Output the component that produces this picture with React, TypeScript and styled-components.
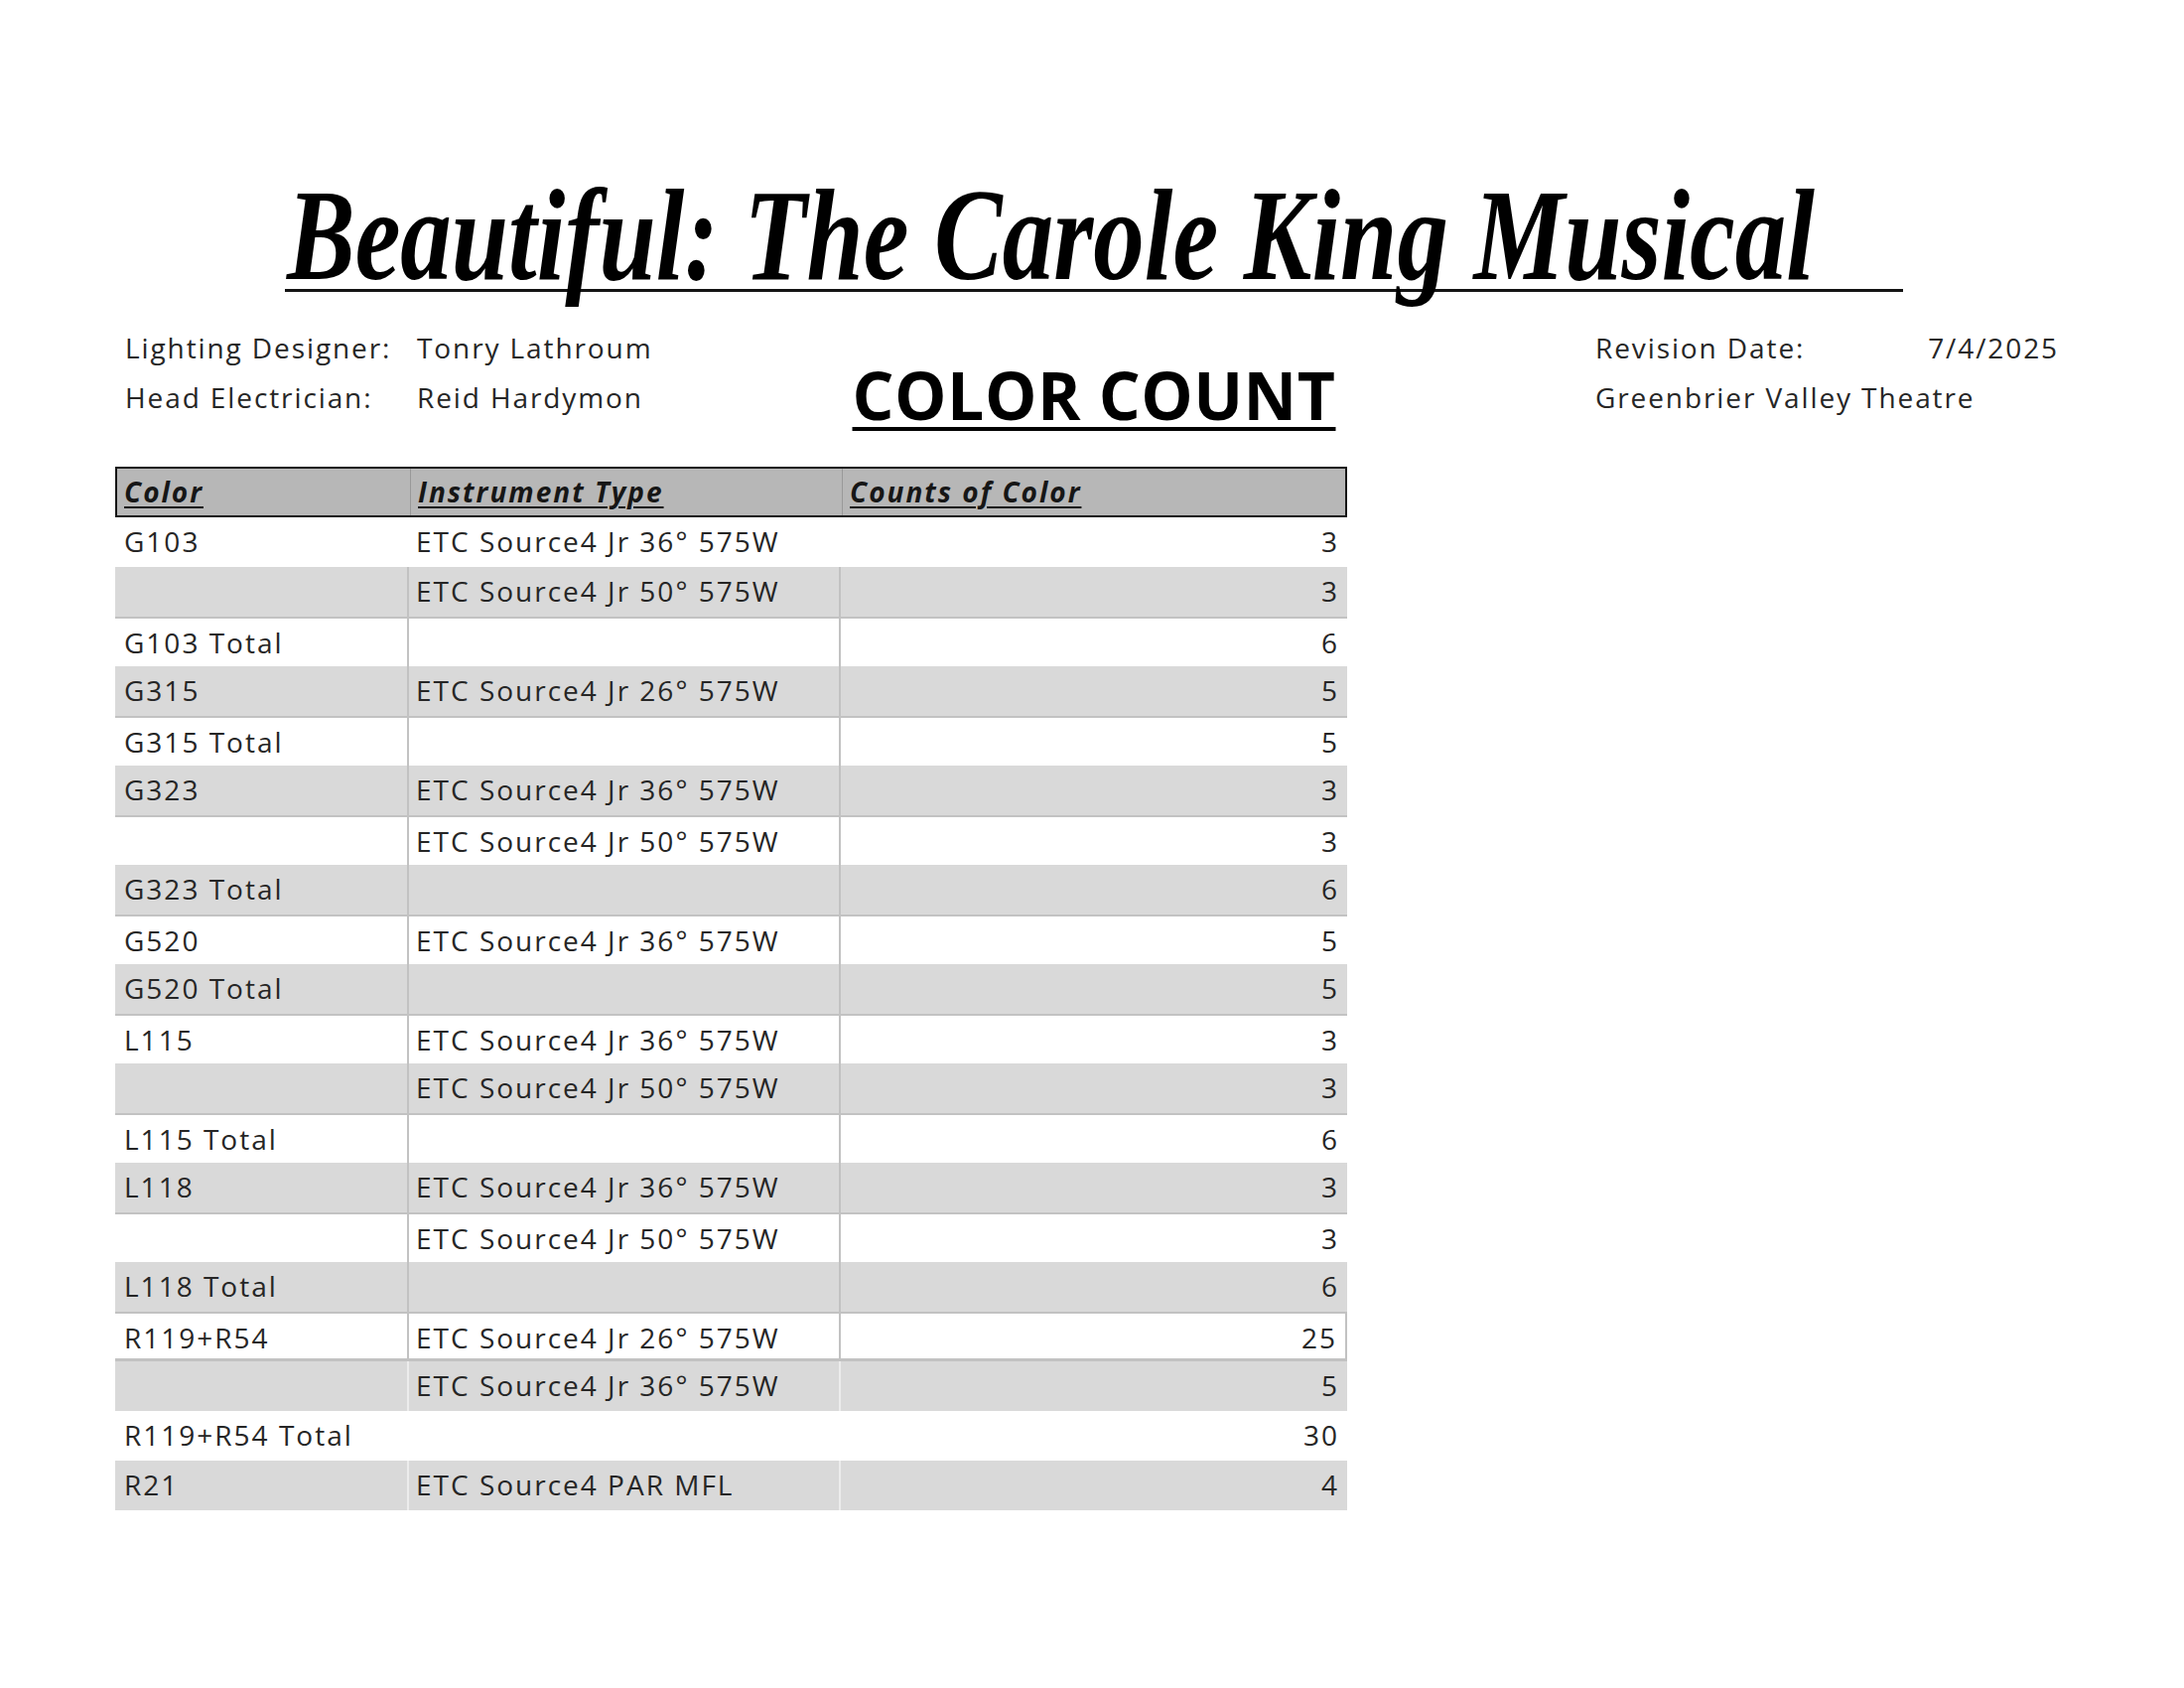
import React from 'react';
import styled, { createGlobalStyle } from 'styled-components';

const GlobalStyle = createGlobalStyle`
  html, body {
    margin: 0;
    padding: 0;
    background: #ffffff;
  }
  body {
    font-family: 'Open Sans', 'Liberation Sans', sans-serif;
    color: #1a1a1a;
  }
`;

const Page = styled.div`
  width: 2200px;
  height: 1700px;
  box-sizing: border-box;
  padding-top: 174px;
  background: #ffffff;
  overflow: hidden;
`;

const TitleBar = styled.div`
  margin-left: 287px;
  width: 1630px;
  height: 117px;
  border-bottom: 3px solid #141414;
  display: flex;
  align-items: flex-end;
`;

const TitleText = styled.h1`
  margin: 0 0 -12px 2px;
  font-family: 'Liberation Serif', 'DejaVu Serif', serif;
  font-weight: 700;
  font-style: italic;
  font-size: 132px;
  line-height: 1;
  white-space: nowrap;
  color: #000;
  transform: scaleX(0.78);
  transform-origin: left bottom;
`;

const InfoGrid = styled.div`
  display: grid;
  grid-template-columns: 296px 435px 510px 250px 330px 137px;
  grid-template-rows: 50px 50px;
  margin: 31px 0 0 116px;
  font-size: 28px;
  font-weight: 400;
  letter-spacing: 1.9px;
  line-height: 50px;
  color: #262626;
`;

const InfoCell = styled.div<{ $pad?: number; $right?: boolean }>`
  padding-left: ${({ $pad }) => $pad ?? 0}px;
  text-align: ${({ $right }) => ($right ? 'right' : 'left')};
  white-space: nowrap;
`;

const Spacer = styled.div`
  grid-column: 4;
`;

const WideCell = styled(InfoCell)`
  grid-column: 5 / 7;
`;

const SheetHeading = styled.div`
  grid-column: 3;
  grid-row: 1 / 3;
  align-self: start;
  margin-top: 39px;
  text-align: center;
  font-size: 66px;
  font-weight: 700;
  letter-spacing: 0.5px;
  line-height: 66px;
  white-space: nowrap;
  color: #000;
  text-decoration: underline;
  text-decoration-thickness: 4px;
  text-underline-offset: 7px;
`;

const Table = styled.div`
  margin: 45px 0 0 116px;
  width: 1241px;
`;

const HeaderRow = styled.div`
  display: grid;
  grid-template-columns: 296px 435px 510px;
  box-sizing: border-box;
  height: 51px;
  border: 2px solid #161616;
  background: #b7b7b7;
`;

const HeaderCell = styled.div<{ $last?: boolean }>`
  padding-left: 7px;
  border-right: ${({ $last }) => ($last ? 'none' : '1px solid #999')};
  font-size: 28px;
  font-weight: 700;
  font-style: italic;
  letter-spacing: 2px;
  line-height: 47px;
  color: #161616;
  text-decoration: underline;
  text-decoration-thickness: 2px;
  text-underline-offset: 4px;
  white-space: nowrap;
`;

type Shade = 'white' | 'gray';
type Lines = 'none' | 'gray' | 'white';

const Row = styled.div<{ $shade: Shade; $lines: Lines; $closed?: boolean }>`
  display: grid;
  grid-template-columns: 296px 435px 510px;
  box-sizing: border-box;
  height: 50px;
  background: ${({ $shade }) => ($shade === 'gray' ? '#d9d9d9' : '#ffffff')};
  border-top: ${({ $shade, $lines }) =>
    $shade === 'white' && $lines === 'gray' ? '2px solid #c2c2c2' : 'none'};
  border-bottom: ${({ $closed }) => ($closed ? '3px solid #c2c2c2' : 'none')};
`;

const Cell = styled.div<{ $lines: Lines; $last?: boolean; $closed?: boolean; $pad: number }>`
  box-sizing: border-box;
  padding: 0 ${({ $last }) => ($last ? 8 : 0)}px 0 ${({ $pad }) => $pad}px;
  text-align: ${({ $last }) => ($last ? 'right' : 'left')};
  font-size: 28px;
  font-weight: 400;
  letter-spacing: 2px;
  line-height: 48px;
  color: #262626;
  white-space: nowrap;
  border-right: ${({ $lines, $last, $closed }) => {
    if ($last) return $closed ? '2px solid #c2c2c2' : 'none';
    if ($lines === 'gray') return '2px solid #c2c2c2';
    if ($lines === 'white') return '2px solid #ececec';
    return 'none';
  }};
`;

type Entry = {
  color: string;
  type: string;
  count: number;
  shade: Shade;
  lines: Lines;
  closed?: boolean;
};

const jr = (deg: number) => `ETC Source4 Jr ${deg}° 575W`;

const entries: Entry[] = [
  { color: 'G103', type: jr(36), count: 3, shade: 'white', lines: 'none' },
  { color: '', type: jr(50), count: 3, shade: 'gray', lines: 'gray' },
  { color: 'G103 Total', type: '', count: 6, shade: 'white', lines: 'gray' },
  { color: 'G315', type: jr(26), count: 5, shade: 'gray', lines: 'gray' },
  { color: 'G315 Total', type: '', count: 5, shade: 'white', lines: 'gray' },
  { color: 'G323', type: jr(36), count: 3, shade: 'gray', lines: 'gray' },
  { color: '', type: jr(50), count: 3, shade: 'white', lines: 'gray' },
  { color: 'G323 Total', type: '', count: 6, shade: 'gray', lines: 'gray' },
  { color: 'G520', type: jr(36), count: 5, shade: 'white', lines: 'gray' },
  { color: 'G520 Total', type: '', count: 5, shade: 'gray', lines: 'gray' },
  { color: 'L115', type: jr(36), count: 3, shade: 'white', lines: 'gray' },
  { color: '', type: jr(50), count: 3, shade: 'gray', lines: 'gray' },
  { color: 'L115 Total', type: '', count: 6, shade: 'white', lines: 'gray' },
  { color: 'L118', type: jr(36), count: 3, shade: 'gray', lines: 'gray' },
  { color: '', type: jr(50), count: 3, shade: 'white', lines: 'gray' },
  { color: 'L118 Total', type: '', count: 6, shade: 'gray', lines: 'gray' },
  { color: 'R119+R54', type: jr(26), count: 25, shade: 'white', lines: 'gray', closed: true },
  { color: '', type: jr(36), count: 5, shade: 'gray', lines: 'white' },
  { color: 'R119+R54 Total', type: '', count: 30, shade: 'white', lines: 'none' },
  { color: 'R21', type: 'ETC Source4 PAR MFL', count: 4, shade: 'gray', lines: 'white' },
];

const App: React.FC = () => {
  return (
    <>
      <GlobalStyle />
      <Page>
        <TitleBar>
          <TitleText>Beautiful: The Carole King Musical</TitleText>
        </TitleBar>

        <InfoGrid>
          <InfoCell $pad={10}>Lighting Designer:</InfoCell>
          <InfoCell $pad={8}>Tonry Lathroum</InfoCell>
          <SheetHeading>COLOR COUNT</SheetHeading>
          <Spacer />
          <InfoCell>Revision Date:</InfoCell>
          <InfoCell $right>7/4/2025</InfoCell>

          <InfoCell $pad={10}>Head Electrician:</InfoCell>
          <InfoCell $pad={8}>Reid Hardymon</InfoCell>
          <Spacer />
          <WideCell>Greenbrier Valley Theatre</WideCell>
        </InfoGrid>

        <Table>
          <HeaderRow>
            <HeaderCell>Color</HeaderCell>
            <HeaderCell>Instrument Type</HeaderCell>
            <HeaderCell $last>Counts of Color</HeaderCell>
          </HeaderRow>
          {entries.map((e, i) => (
            <Row key={i} $shade={e.shade} $lines={e.lines} $closed={e.closed}>
              <Cell $lines={e.lines} $pad={9}>
                {e.color}
              </Cell>
              <Cell $lines={e.lines} $pad={7}>
                {e.type}
              </Cell>
              <Cell $lines={e.lines} $pad={0} $last $closed={e.closed}>
                {e.count}
              </Cell>
            </Row>
          ))}
        </Table>
      </Page>
    </>
  );
};

export default App;
